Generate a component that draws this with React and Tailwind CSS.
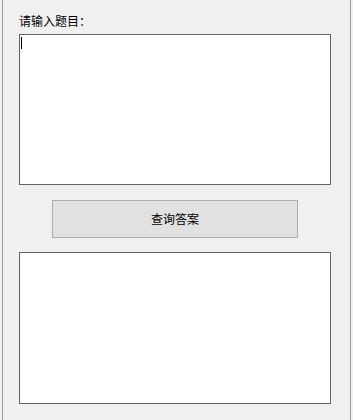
export default function App() {
  const font = { fontFamily: '"Noto Sans CJK SC", "Microsoft YaHei", sans-serif' };
  return (
    <div className="w-[353px] h-[420px] bg-[#f0f0f0] pl-[2px] overflow-hidden" style={font}>
      <div className="w-[349px] h-full border-l border-r border-[#a0a0a0] flex flex-col pl-[16px]">
        <label className="mt-[10px] h-[24px] text-[12px] leading-[22px] text-black">请输入题目：</label>
        <div className="w-[312px] h-[151px] bg-white border border-[#646464] pt-[2px] pl-[1px]">
          <div className="w-[1px] h-[12px] bg-black"></div>
        </div>
        <div className="w-[312px] flex justify-center mt-[15px]">
          <button className="w-[246px] h-[38px] bg-[#e1e1e1] border border-[#adadad] text-[12px] text-black">
            查询答案
          </button>
        </div>
        <div className="w-[312px] h-[152px] bg-white border border-[#646464] mt-[14px]"></div>
      </div>
    </div>
  );
}
